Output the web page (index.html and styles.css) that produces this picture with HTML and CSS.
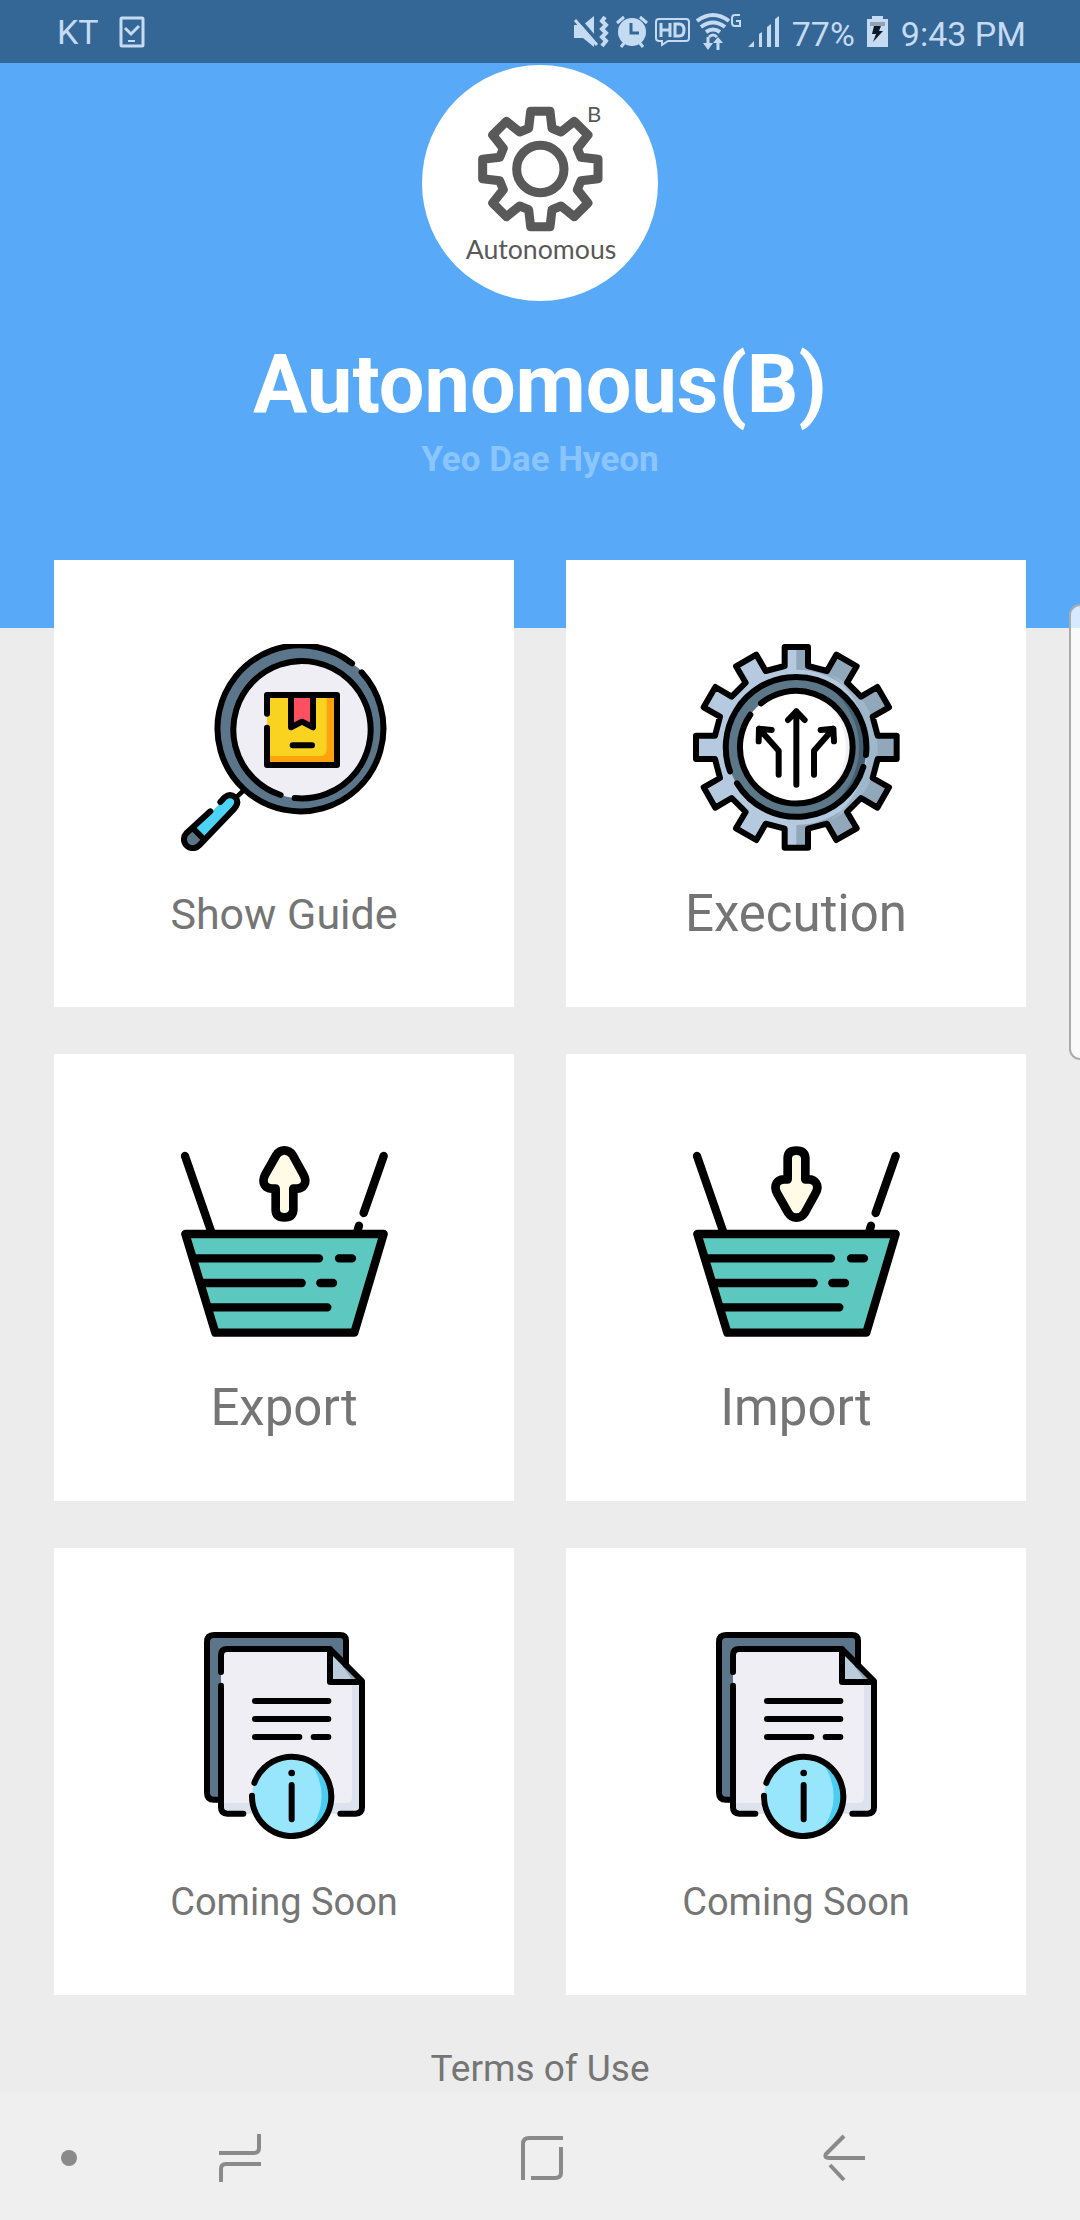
FILE: index.html
```html
<!DOCTYPE html>
<html lang="en">
<head>
<meta charset="utf-8">
<meta name="viewport" content="width=device-width, initial-scale=1">
<title>Autonomous(B)</title>
<link rel="stylesheet" href="styles.css">
</head>
<body>
<svg class="defs" aria-hidden="true">
  <defs>
    <symbol id="basket" viewBox="63 54 621 621">
      <g fill="none" stroke="#000" stroke-width="25" stroke-linecap="round" stroke-linejoin="round">
        <path d="M75 108L154 336M671 108L611 279M597 317L592 334"/>
        <path fill="#5dc8c0" d="M76 342H671L583 638H166Z"/>
        <path d="M100 415H477M537 415H576M124 489H425M481 489H519M146 562H502"/>
      </g>
    </symbol>
    <symbol id="arrow" viewBox="63 54 621 621">
      <path fill="#fffbe6" stroke="#000" stroke-width="26" stroke-linejoin="round" d="M373 91Q389 91 398 105L430 163Q441 182 432 195Q426 205 412 206H400V270Q398 292 373 292Q348 292 347 270V206H335Q320 205 314 195Q306 182 316 163L349 105Q358 91 373 91Z"/>
    </symbol>
    <symbol id="document" viewBox="63 66 621 621">
      <path fill="#5b768a" d="M141 96Q141 75 162 75H540Q558 75 558 92V569H141Z"/>
      <path fill="#dde3ec" d="M183 117H510L606 213V611H183Z"/>
      <path fill="#efeef4" d="M183 117H510L576 183V560Q576 579 558 579H183Z"/>
      <path fill="#b9cddd" d="M510 117L606 213H510Z"/>
      <path fill="#93aabc" d="M520 127L606 213H578Z"/>
      <g fill="none" stroke="#000" stroke-width="18" stroke-linecap="round" stroke-linejoin="round">
        <path d="M183 569H162Q141 569 141 548V96Q141 75 162 75H540Q558 75 558 92V165"/>
        <path d="M183 186V136Q183 117 202 117H510L606 213V592Q606 611 587 611H541M183 227V592Q183 611 202 611H250M510 117V216H606"/>
        <path d="M285 273H505M285 327H505M285 381H418M461 381H505"/>
      </g>
      <circle cx="395" cy="558" r="119" fill="#98e6fc"/>
      <path fill="#4bcdf3" d="M440 447A119 119 0 0 1 440 669A160 160 0 0 0 440 447Z"/>
      <g fill="none" stroke="#000" stroke-width="18" stroke-linecap="round">
        <path d="M283 519A119 119 0 1 1 276 557M395 525V628"/>
      </g>
      <circle cx="395" cy="489" r="10"/>
    </symbol>
  </defs>
</svg>

<div class="status" role="status">
  <div class="status-left">
    <span class="carrier">KT</span>
    <svg width="26" height="32" viewBox="118 16 26 32" fill="none" stroke="#c4dbf2"><rect x="120" y="18" width="22" height="28" rx="1" stroke-width="3"/><path d="M124 28L130 34L138 26" stroke-width="3"/><path d="M127 41H134" stroke-width="2"/></svg>
  </div>
  <div class="status-right">
    <div class="status-icons">
      <svg width="36" height="34" viewBox="573 15 36 34"><path fill="#c4dbf2" d="M574 25H583L594 16V47L583 38H574Z"/><path d="M577 17L600 44" stroke="#346696" stroke-width="4"/><path d="M575 20L597 45" stroke="#c4dbf2" stroke-width="3"/><path d="M605 17L602 21L606 25L602 29L606 33L602 37L606 41L602 46" fill="none" stroke="#c4dbf2" stroke-width="4"/></svg>
      <svg width="34" height="34" viewBox="617 15 34 34"><g stroke="#c4dbf2" stroke-width="3"><path d="M619 23L626 17M649 23L642 17M623 47L627 42M645 47L641 42"/></g><circle cx="634" cy="32" r="14" fill="#c4dbf2"/><path d="M633 23V33H641" fill="none" stroke="#346696" stroke-width="3"/></svg>
      <svg width="35" height="34" viewBox="656 15 35 34"><path d="M660 19H687Q690 19 690 22V38Q690 41 687 41H669L663 45V41H660Q657 41 657 38V22Q657 19 660 19Z" fill="none" stroke="#c4dbf2" stroke-width="2"/><path d="M662 23V37M671 23V37M662 30H671M676 24V36H680Q685 36 685 30Q685 24 680 24Z" fill="none" stroke="#c4dbf2" stroke-width="3"/></svg>
      <svg width="46" height="40" viewBox="700 12 46 40"><g fill="none" stroke="#c4dbf2" stroke-width="4"><path d="M701 21Q717 9 733 21M705 27Q717 18 729 27M710 32Q717 27 724 32"/><path stroke-width="3" d="M713 37Q717 33 721 37M712 37V46M722 50V40"/><path stroke-width="2" d="M744 15H739Q736 15 736 18V23Q736 26 739 26H744V21H740"/></g><path fill="#c4dbf2" d="M707 43H717L712 50ZM717 43L722 37L727 43Z"/></svg>
      <svg width="32" height="34" viewBox="750 15 32 34"><path fill="#c4dbf2" d="M750 47L756 41V47ZM761 34L764 32V47H761ZM769 27L773 24V47H769ZM777 19L781 16V47H777Z"/></svg>
    </div>
    <span class="battery-level">77%</span>
    <svg width="22" height="34" viewBox="867 15 22 34"><path fill="#c4dbf2" d="M872 16H883V19H888V47H867V19H872Z"/><path fill="#8fa3b5" d="M870 22H885V26H870Z"/><path fill="#0d1b29" d="M874 26H881L879 31H883L873 42L876 34H872Z"/></svg>
    <time>9:43 PM</time>
  </div>
</div>

<header class="hero">
  <svg class="logo" viewBox="66 45 708 708" role="img" aria-label="Autonomous B">
    <circle cx="420" cy="399" r="354" fill="#fff"/>
    <g transform="translate(421 357)" fill="none" stroke="#595959" stroke-width="27" stroke-linejoin="round">
      <path d="M-35-122L-29-173H29L35-122L62-111L102-143L143-102L111-62L122-35L173-29V29L122 35L111 62L143 102L102 143L62 111L35 122L29 173H-29L-35 122L-62 111L-102 143L-143 102L-111 62L-122 35L-173 29V-29L-122-35L-111-62L-143-102L-102-143L-62-111Z"/>
      <circle r="71"/>
    </g>
    <text class="logo-text" x="582" y="215" font-size="66">B</text>
    <text class="logo-text" x="423" y="627" font-size="80">Autonomous</text>
  </svg>
  <h1>Autonomous(B)</h1>
  <p>Yeo Dae Hyeon</p>
</header>

<main>
  <div class="cards">
    <button class="card" type="button">
      <svg viewBox="63 72 621 621" aria-hidden="true">
        <circle cx="427" cy="329" r="249" fill="#5b768a"/>
        <path fill="#475f70" d="M580 132A249 249 0 0 1 500 567A265 265 0 0 0 580 132Z"/>
        <circle cx="427" cy="329" r="206" fill="#dde3ec"/>
        <path fill="#efeef4" d="M500 137A206 206 0 1 0 470 531A210 210 0 0 0 500 137Z"/>
        <path fill="#fad220" d="M321 225H531V435H321Z"/>
        <path fill="#ffa20c" d="M500 225H531V435H321V408H482Q500 408 500 388Z"/>
        <path fill="#ff5060" d="M393 225V322L426 305L459 322V225Z"/>
        <path fill="#4cd4f6" d="M103 628L185 545Q208 520 226 532Q238 546 223 566L130 660Z"/>
        <path fill="#5b768a" d="M103 625L130 660L105 684L75 670L78 640Z"/>
        <g fill="none" stroke="#000" stroke-width="18" stroke-linecap="round" stroke-linejoin="round">
          <path d="M605 157A249 249 0 1 1 576 130"/>
          <path d="M362 525A206 206 0 1 1 404 534"/>
          <path d="M321 281V225H531V435H321V323M393 225V322L426 305L459 322V225M398 376H456"/>
          <path stroke-width="14" d="M231 530L252 510"/>
          <path d="M151 574L79 640A26 26 0 1 0 118 676L223 566Q239 546 226 532Q210 519 194 532L181 546M104 630L131 657"/>
        </g>
      </svg>
      <span class="label medium">Show Guide</span>
    </button>
    <button class="card" type="button">
      <svg viewBox="-310 -310 621 621" aria-hidden="true">
        <defs>
          <clipPath id="gear-clip"><path id="gear" d="M-35-244V-301H35V-244L92-229L120-278L181-243L152-194L194-152L243-181L278-120L229-92L244-35H301V35H244L229 92L278 120L243 181L194 152L152 194L181 243L120 278L92 229L35 244V301H-35V244L-92 229L-120 278L-181 243L-152 194L-194 152L-243 181L-278 120L-229 92L-244 35H-301V-35H-244L-229-92L-278-120L-243-181L-194-152L-152-194L-181-243L-120-278L-92-229Z"/></clipPath>
        </defs>
        <use href="#gear" fill="#b5cade"/>
        <path clip-path="url(#gear-clip)" fill="#90a8ba" d="M0-310H310V310H0Z"/>
        <circle r="233" fill="#b5cade"/>
        <path fill="#9fb7ca" d="M100-220A240 240 0 0 1 100 220A270 270 0 0 0 100-220Z"/>
        <circle r="210" fill="#5b7788"/>
        <path fill="#435e70" d="M70-198A210 210 0 0 1 70 198A225 225 0 0 0 70-198Z"/>
        <circle r="169" fill="#fff"/>
        <path fill="#efeff5" d="M70-154A169 169 0 0 1 70 154A190 190 0 0 0 70-154Z"/>
        <g fill="none" stroke="#000" stroke-width="18" stroke-linecap="round" stroke-linejoin="round">
          <use href="#gear"/>
          <path d="M-178 108A209 209 0 0 0 201 59M-199 72A211 211 0 1 1 209 23M-106-132A169 169 0 1 1-138-98"/>
          <path d="M0 112V-108M-25-82L0-108L25-82M-53 82V10L-112-56M-74-52L-112-56L-113-18M53 82V10L111-56M73-52L111-56L113-18"/>
        </g>
      </svg>
      <span class="label large">Execution</span>
    </button>
    <button class="card" type="button">
      <svg viewBox="0 0 207 207" aria-hidden="true"><use href="#basket"/><use href="#arrow"/></svg>
      <span class="label large">Export</span>
    </button>
    <button class="card" type="button">
      <svg viewBox="0 0 207 207" aria-hidden="true"><use href="#basket"/><use href="#arrow" transform="translate(0 92) scale(1 -1)"/></svg>
      <span class="label large">Import</span>
    </button>
    <button class="card" type="button">
      <svg viewBox="0 0 207 207" aria-hidden="true"><use href="#document"/></svg>
      <span class="label small">Coming Soon</span>
    </button>
    <button class="card" type="button">
      <svg viewBox="0 0 207 207" aria-hidden="true"><use href="#document"/></svg>
      <span class="label small">Coming Soon</span>
    </button>
  </div>
  <a class="terms" href="#terms">Terms of Use</a>
</main>

<nav class="navbar" aria-label="System">
  <button type="button" aria-label="Hide bar"><svg width="16" height="16" viewBox="0 0 16 16"><circle cx="8" cy="8" r="8" fill="#8a8a8a"/></svg></button>
  <button type="button" aria-label="Recent apps"><svg width="42" height="48" viewBox="0 0 42 48"><path d="M0 19H35Q40 19 40 14V0M42 30H7Q2 30 2 35V48"/></svg></button>
  <button type="button" aria-label="Home"><svg width="42" height="44" viewBox="0 0 42 44"><path d="M42 2H8Q2 2 2 8V44M40 11V37Q40 42 34 42H10"/></svg></button>
  <button type="button" aria-label="Back"><svg width="42" height="48" viewBox="0 0 42 48"><path d="M21 2L3 20Q1 24 6 24H42M7 31L21 46"/></svg></button>
</nav>
<div class="edge-handle"></div>
</body>
</html>
```
FILE: styles.css
```css
* {
  box-sizing: border-box;
}

body {
  position: relative;
  display: flex;
  flex-direction: column;
  min-height: 100vh;
  margin: 0;
  background: #ececec;
  color: #757575;
  font-family: Roboto, "Liberation Sans", sans-serif;
}

button {
  border: 0;
  padding: 0;
  background: none;
  color: inherit;
  font: inherit;
}

svg {
  display: block;
  flex: none;
}

.defs {
  position: absolute;
  width: 0;
  height: 0;
}

.status {
  display: flex;
  justify-content: space-between;
  align-items: center;
  height: 63px;
  padding: 0 54px 0 57px;
  background: #346696;
  color: #c4dbf2;
  font-size: 34px;
  line-height: 40px;
}

.status-left,
.status-right,
.status-icons {
  display: flex;
  align-items: center;
}

.status-left {
  gap: 20px;
}

.status-right {
  gap: 12px;
}

.status-icons {
  gap: 6px;
}

.battery-level,
time {
  padding-top: 4px;
}

.hero {
  display: flex;
  flex-direction: column;
  align-items: center;
  padding: 2px 0 144px;
  background: #58aaf9;
}

.logo {
  width: 236px;
  height: 236px;
}

.logo-text {
  fill: #595959;
  font-family: Lato, sans-serif;
  text-anchor: middle;
}

h1 {
  margin: 36px 0 0;
  color: #fff;
  font-size: 81px;
  font-weight: 700;
  line-height: 96px;
}

.hero p {
  margin: 3px 0 0;
  color: #8bc5ff;
  font-size: 35px;
  font-weight: 700;
  line-height: 48px;
}

main {
  display: flex;
  flex-direction: column;
  align-items: center;
}

.cards {
  display: grid;
  grid-template-columns: 1fr 1fr;
  gap: 47px 52px;
  align-self: stretch;
  margin-top: -68px;
  padding: 0 54px;
}

.card {
  display: flex;
  flex-direction: column;
  align-items: center;
  gap: 23px;
  padding: 84px 0 53px;
  background: #fff;
}

.card svg {
  width: 207px;
  height: 207px;
}

.label {
  line-height: 80px;
}

.large {
  font-size: 51px;
}

.medium {
  font-size: 43px;
}

.small {
  font-size: 38px;
}

.terms {
  margin-top: 50px;
  color: #757575;
  font-size: 37px;
  line-height: 47px;
  text-decoration: none;
}

.navbar {
  display: grid;
  grid-template-columns: 40px 1fr 1fr 1fr;
  height: 128px;
  margin-top: auto;
  padding: 4px 85px 0 49px;
  background: #efefef;
}

.navbar button {
  display: flex;
  justify-content: center;
  align-items: center;
}

.navbar path {
  fill: none;
  stroke: #8a8a8a;
  stroke-width: 4;
}

.edge-handle {
  position: absolute;
  top: 604px;
  right: 0;
  width: 11px;
  height: 456px;
  border: 2px solid #acacac;
  border-right: 0;
  border-radius: 14px 0 0 14px;
  background: rgba(255, 255, 255, 0.75);
}
```
